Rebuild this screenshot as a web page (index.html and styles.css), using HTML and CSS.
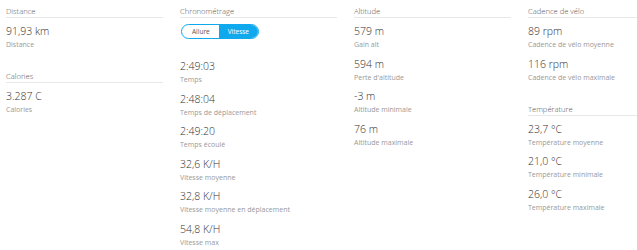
FILE: index.html
```html
<!DOCTYPE html>
<html lang="fr">
<head>
    <meta charset="UTF-8">
    <title>Statistiques</title>
    <link rel="stylesheet" href="styles.css">
</head>
<body>
    <div class="stats">
        <div class="column">
            <div class="section">
                <h4>Distance</h4>
                <div class="item"><div class="value">91,93 km</div><div class="label">Distance</div></div>
            </div>
            <div class="section">
                <h4>Calories</h4>
                <div class="item"><div class="value">3.287 C</div><div class="label">Calories</div></div>
            </div>
        </div>

        <div class="column">
            <div class="section">
                <h4>Chronométrage</h4>
                <div class="toggle">
                    <span class="toggle-btn">Allure</span>
                    <span class="toggle-btn active">Vitesse</span>
                </div>
                <div class="item"><div class="value">2:49:03</div><div class="label">Temps</div></div>
                <div class="item"><div class="value">2:48:04</div><div class="label">Temps de déplacement</div></div>
                <div class="item"><div class="value">2:49:20</div><div class="label">Temps écoulé</div></div>
                <div class="item"><div class="value">32,6 K/H</div><div class="label">Vitesse moyenne</div></div>
                <div class="item"><div class="value">32,8 K/H</div><div class="label">Vitesse moyenne en déplacement</div></div>
                <div class="item"><div class="value">54,8 K/H</div><div class="label">Vitesse max</div></div>
            </div>
        </div>

        <div class="column">
            <div class="section">
                <h4>Altitude</h4>
                <div class="item"><div class="value">579 m</div><div class="label">Gain alt</div></div>
                <div class="item"><div class="value">594 m</div><div class="label">Perte d'altitude</div></div>
                <div class="item"><div class="value">-3 m</div><div class="label">Altitude minimale</div></div>
                <div class="item"><div class="value">76 m</div><div class="label">Altitude maximale</div></div>
            </div>
        </div>

        <div class="column">
            <div class="section">
                <h4>Cadence de vélo</h4>
                <div class="item"><div class="value">89 rpm</div><div class="label">Cadence de vélo moyenne</div></div>
                <div class="item"><div class="value">116 rpm</div><div class="label">Cadence de vélo maximale</div></div>
            </div>
            <div class="section">
                <h4>Température</h4>
                <div class="item"><div class="value">23,7 °C</div><div class="label">Température moyenne</div></div>
                <div class="item"><div class="value">21,0 °C</div><div class="label">Température minimale</div></div>
                <div class="item"><div class="value">26,0 °C</div><div class="label">Température maximale</div></div>
            </div>
        </div>
    </div>
</body>
</html>
```

FILE: styles.css
```css
/* Page */
html, body {
    margin: 0;
    padding: 0;
    background: #fff;
    overflow: hidden;
    height: 250px;
}

body {
    font-family: 'Open Sans', 'Liberation Sans', sans-serif;
    color: #444;
    padding: 5px 0 0 6px;
    box-sizing: border-box;
}

/* Columns */
.stats {
    display: flex;
    gap: 17px;
}

.column {
    width: 157px;
    flex-shrink: 0;
}

.section + .section {
    margin-top: 20px;
}

h4 {
    margin: 0 0 6px;
    font-size: 7.6px;
    font-weight: 300;
    line-height: 12px;
    color: #555;
    border-bottom: 1px solid #e8e8e8;
}

/* Stat items */
.item {
    margin-bottom: 6.5px;
}

.item:last-child {
    margin-bottom: 0;
}

.value {
    font-size: 10.5px;
    font-weight: 300;
    line-height: 14px;
    color: #333;
}

.label {
    font-size: 7px;
    line-height: 11px;
    margin-top: 1px;
    color: #999;
}

/* Allure / Vitesse switch */
.toggle {
    display: flex;
    width: fit-content;
    height: 13px;
    border: 1px solid #11a9ed;
    border-radius: 8px;
    overflow: hidden;
    margin: 0 0 20px 1px;
}

.toggle-btn {
    font-size: 6.5px;
    line-height: 13px;
    padding: 0 9px 0 10px;
    color: #555;
}

.toggle-btn.active {
    background: #11a9ed;
    color: #fff;
    padding: 0 9px;
}
```
